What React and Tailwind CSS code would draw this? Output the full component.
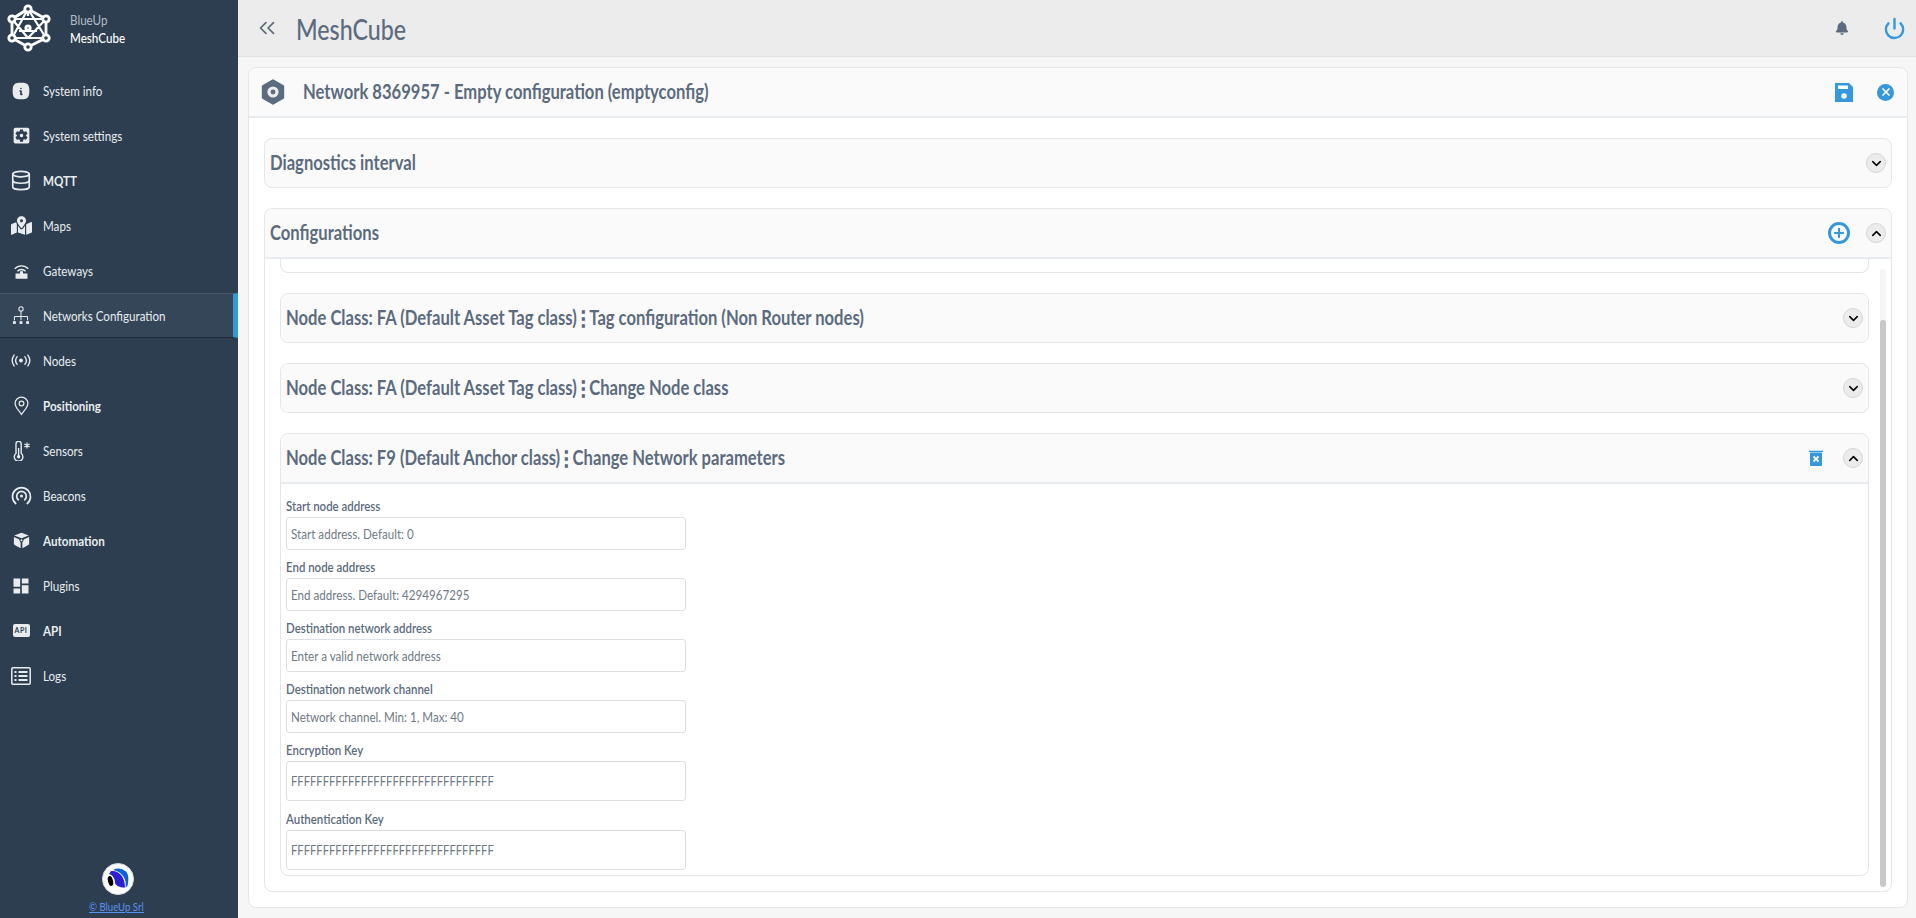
import React from "react";
import { ChevronsLeft, Power, ChevronDown, ChevronUp, Database, Plus, X } from "lucide-react";
import { FaMapMarkedAlt, FaBell } from "react-icons/fa";
import { MdSettingsApplications, MdDashboard } from "react-icons/md";
import { TbInfoSquareRoundedFilled } from "react-icons/tb";

const Logo = () => {
  const n = [[28,9],[46,19],[46,38],[28,47],[12,38],[12,19],[28,28]];
  return (
    <svg viewBox="0 0 56 56" className="h-[56px] w-[56px] shrink-0" fill="none" stroke="#fff" strokeLinejoin="round">
      <path d="M28 9 46 19 46 38 28 47 12 38 12 19Z" strokeWidth="2.800" />
      <path d="M28 9 12 38H46Z M12 19H46 L28 38 Z M19 31H37 M12 19 28 9 M28 9 28 16" strokeWidth="2.200" />
      {n.map(([x,y],i)=>(
        <circle key={i} cx={x} cy={y} r={i===6 ? 2.200 : 3.200} fill="#2c3e50" strokeWidth="2.800" />
      ))}
    </svg>
  );
};

const GatewayIcon = () => (
  <svg viewBox="0 0 20 20" className="w-[17px] h-[18px]" fill="none" stroke="#e8ecef" strokeWidth="1.6">
    <path d="M2 7.5a11 11 0 0 1 16 0" /><path d="M5.2 10.3a6.6 6.6 0 0 1 9.6 0" />
    <path d="M3 13h5.2v-2.8h3.6V13H17v6H3Z" fill="#e8ecef" stroke="none" />
  </svg>
);
const NetworkIcon = () => (
  <svg viewBox="0 0 17 20" className="w-[16px] h-[19px]" fill="none" stroke="#e8ecef" strokeWidth="1.1">
    <circle cx="8.500" cy="3" r="2.300" /><path d="M8.500 5.300V11M1.500 11H15.500M1.500 11v4M8.500 11v4M15.500 11v4" />
    <g fill="#e8ecef" stroke="none"><rect y="16" width="3" height="3" /><rect x="7" y="16" width="3" height="3" /><rect x="14" y="16" width="3" height="3" /></g>
  </svg>
);
const NodesIcon = () => (
  <svg viewBox="0 0 22 14" className="w-[20px] h-[13px]" fill="none" stroke="#e8ecef" strokeWidth="1.5" strokeLinecap="round">
    <circle cx="11" cy="7" r="2.1" fill="#e8ecef" stroke="none" />
    <path d="M6.8 2.8a6.5 6.5 0 0 0 0 8.4M15.2 2.8a6.5 6.5 0 0 1 0 8.4M3.4 1a10.5 10.5 0 0 0 0 12M18.6 1a10.5 10.5 0 0 1 0 12" />
  </svg>
);
const PinIcon = () => (
  <svg viewBox="0 0 16 20" className="w-[15px] h-[20px]" fill="none" stroke="#e8ecef" strokeWidth="1.3">
    <path d="M8 19C5 14.5 1.2 11.5 1.2 7.4a6.8 6.8 0 0 1 13.6 0C14.8 11.5 11 14.5 8 19Z" /><circle cx="8" cy="7.4" r="2.5" />
  </svg>
);
const SensorIcon = () => (
  <svg viewBox="0 0 20 20" className="w-[20px] h-[20px]" fill="none" stroke="#e8ecef" strokeWidth="1.4">
    <path d="M5 12.5V3a2.6 2.6 0 0 1 5.2 0v9.500a4.300 4.300 0 1 1-5.200 0Z" />
    <circle cx="7.600" cy="15.800" r="1.700" fill="#e8ecef" stroke="none" /><path d="M7.600 15V7" />
    <path d="M16 1.500v6M13.400 3l5.200 3M18.600 3l-5.200 3" strokeWidth="1.200" />
  </svg>
);
const BeaconIcon = () => (
  <svg viewBox="0 0 20 20" className="w-[21px] h-[20px]" fill="none" stroke="#e8ecef" strokeWidth="1.700" strokeLinecap="round">
    <path d="M4.200 17.500a9 9 0 1 1 11.600 0" /><path d="M6.800 13.800a4.800 4.800 0 1 1 6.400 0" />
    <circle cx="10" cy="10" r="1.500" fill="#e8ecef" stroke="none" />
  </svg>
);
const CubeIcon = () => (
  <svg viewBox="0 0 20 20" className="w-[17px] h-[17px]" fill="#e8ecef">
    <path d="M10 .8 18.500 4 10 7.400 1.500 4Z" />
    <path d="M1 6 7 8.400 9 12.500V19L4 16.500 1 14.500Z" />
    <path d="M19 6 13 8.400 11 12.500V19L16 16.500 19 14.500Z" />
    <circle cx="10" cy="9.800" r="1.200" />
  </svg>
);
const ApiIcon = () => (
  <span className="flex h-[13px] w-[17px] items-center justify-center rounded-[2px] bg-[#e8ecef] text-[7px] font-bold leading-none tracking-[0.5px] text-[#2c3e50]">API</span>
);
const LogsIcon = () => (
  <svg viewBox="0 0 20 18" className="w-[20px] h-[18px]" fill="none" stroke="#e8ecef" strokeWidth="1.500">
    <rect x=".8" y=".8" width="18.400" height="16.400" rx="1" />
    <path d="M7.500 5h9M7.500 9h9M7.500 13h9" strokeWidth="1.800" />
    <path d="M3.500 5h2M3.500 9h2M3.500 13h2" strokeWidth="1.800" />
  </svg>
);
const HexIcon = () => (
  <svg viewBox="0 0 24 26" className="w-[24px] h-[26px]">
    <path d="M12 1.500 22 7.200v11.600L12 24.500 2 18.800V7.200Z" fill="#5c6b7e" stroke="#5c6b7e" strokeWidth="2.400" strokeLinejoin="round" />
    <circle cx="12" cy="13" r="5.600" fill="#e9ebee" /><circle cx="12" cy="13" r="2.400" fill="#5c6b7e" />
  </svg>
);
const SaveIcon = () => (
  <svg viewBox="0 0 18 19" className="ml-auto h-[19px] w-[18px]">
    <path d="M0 0H14L18 4V19H0Z" fill="#3498db" />
    <rect x="3" y="2.500" width="10" height="3.500" fill="#fff" />
    <circle cx="9" cy="13" r="2.800" fill="#fff" />
  </svg>
);
const TrashIcon = () => (
  <svg viewBox="0 0 14 16" className="w-[14px] h-[16px]">
    <path d="M0 .8h14V2H0Z M1 2.500h12V15a1 1 0 0 1-1 1H2a1 1 0 0 1-1-1Z" fill="#3498db" />
    <path d="M4.500 6.500l5 5M9.500 6.500l-5 5" stroke="#fff" strokeWidth="1.800" />
  </svg>
);
const FooterLogo = () => (
  <svg viewBox="0 0 32 32" className="w-[32px] h-[32px]">
    <circle cx="16" cy="16" r="15.500" fill="#fff" stroke="#d8d8d8" />
    <path d="M11 7a12 12 0 0 1 13 1.500c2.500 2.500 3 8 1.500 14.500l-2 1.500C25 17 21 9 11 7Z" fill="#0d63d6" />
    <path d="M9 8c8-1 14 6 14 16.500C19 25 14 23 13 20c0-4-2-8-6-9Z" fill="#2a1fd4" />
    <ellipse cx="8.500" cy="18" rx="2.500" ry="5" fill="#000" transform="rotate(-15 8.500 18)" />
  </svg>
);

const nav = [
  { t: "System info", i: <TbInfoSquareRoundedFilled className="text-[#e8ecef] w-[20px] h-[20px]" /> },
  { t: "System settings", i: <MdSettingsApplications className="text-[#e8ecef] w-[21px] h-[21px]" /> },
  { t: "MQTT", b: true, i: <Database className="text-[#e8ecef] w-[23px] h-[23px]" strokeWidth={1.8} /> },
  { t: "Maps", i: <FaMapMarkedAlt className="text-[#e8ecef] w-[21px] h-[19px]" /> },
  { t: "Gateways", i: <GatewayIcon /> },
  { t: "Networks Configuration", i: <NetworkIcon />, active: true },
  { t: "Nodes", i: <NodesIcon /> },
  { t: "Positioning", b: true, i: <PinIcon /> },
  { t: "Sensors", i: <SensorIcon /> },
  { t: "Beacons", i: <BeaconIcon /> },
  { t: "Automation", b: true, i: <CubeIcon /> },
  { t: "Plugins", i: <MdDashboard className="text-[#e8ecef] w-[20px] h-[20px]" /> },
  { t: "API", b: true, i: <ApiIcon /> },
  { t: "Logs", i: <LogsIcon /> },
];

const Cond = ({ className = "", children }) => (
  <span className={"inline-block origin-left whitespace-nowrap scale-x-[0.83] " + className}>{children}</span>
);

const Dots = () => (
  <span className="-mx-[2.500px] font-bold [-webkit-text-stroke:0.7px_#5c6b7e]">⋮</span>
);

const Toggle = ({ up }) => (
  <span className="flex h-[20px] w-[20px] shrink-0 items-center justify-center rounded-full border border-[#d6d6d6] bg-[#ececec] text-black">
    {up ? <ChevronUp className="h-[15px] w-[15px]" strokeWidth={2.4} /> : <ChevronDown className="h-[15px] w-[15px]" strokeWidth={2.4} />}
  </span>
);

const Heading = ({ children }) => (
  <Cond className="-translate-y-[1px] text-[20px] font-bold leading-none text-[#5c6b7e]">{children}</Cond>
);

const Item = ({ title, children, open, right }) => (
  <div className="rounded-[8px] border border-[#e6e6e6] bg-white">
    <div className={"flex items-center rounded-t-[8px] bg-[#fafafa] pl-[5px] pr-[5px] " + (open ? "h-[50px] border-b-2 border-[#e8ebef]" : "h-[48px] rounded-b-[8px]")}>
      <Heading>{title}</Heading>
      <span className="ml-auto flex items-center gap-[20px]">{right}<Toggle up={open} /></span>
    </div>
    {children}
  </div>
);

const Field = ({ label, ph, tall, className = "" }) => (
  <div className={"flex flex-col " + className}>
    <label className="flex h-[28px] items-end pb-[4px] text-[13.800px] font-semibold leading-none text-[#5c6b7e]"><Cond>{label}</Cond></label>
    <div className={"w-[400px] overflow-hidden rounded-[3px] border border-[#dcdfe3] bg-white px-[4px] " + (tall ? "h-[40px]" : "h-[33px]")}>
      <input readOnly placeholder={ph} className={"h-full w-[120%] origin-left scale-x-[0.83] bg-transparent text-[#6f7a85] outline-none placeholder:text-[#6f7a85] " + (tall ? "text-[13.500px]" : "text-[14px]")} />
    </div>
  </div>
);

export default function App() {
  return (
    <div className="flex h-screen w-full overflow-hidden bg-[#f6f6f6] font-['Lato',sans-serif]">
      <aside className="flex w-[238px] shrink-0 flex-col bg-[#2c3e50]">
        <div className="flex h-[68px] items-start">
          <Logo />
          <div className="ml-[14px] mt-[11px] text-[14px] leading-[18px]">
            <div className="text-[#b4bcc4]"><Cond>BlueUp</Cond></div>
            <div className="font-medium text-white"><Cond>MeshCube</Cond></div>
          </div>
        </div>
        <nav className="flex flex-col">
          {nav.map((n) => (
            <a key={n.t} className={"flex h-[45px] items-center pl-[10px] text-[14px] text-[#e8ecef] " + (n.active ? "border-y border-r-[5px] border-t-[#46596b] border-b-[#1e2c3a] border-r-[#3498db] bg-[#344658]" : "")}>
              <span className="flex w-[22px] items-center justify-center">{n.i}</span>
              <Cond className={"ml-[11px] " + (n.b ? "font-bold" : "")}>{n.t}</Cond>
            </a>
          ))}
        </nav>
        <div className="mt-auto flex flex-col items-center pb-[4px] pr-[2px]">
          <FooterLogo />
          <a href="#" className="mt-[4px] flex w-[58px] text-[12px] leading-[15px] text-[#5b93f0] underline"><span className="inline-block origin-left scale-x-[0.8] whitespace-nowrap underline">© BlueUp Srl</span></a>
        </div>
      </aside>

      <main className="flex min-w-0 flex-1 flex-col">
        <header className="flex h-[57px] shrink-0 items-center border-b border-[#dde0e5] bg-[#ececec] pl-[16px] pr-[10px]">
          <ChevronsLeft className="h-[26px] w-[26px] text-[#5c6b7e]" strokeWidth={1.6} />
          <h1 className="ml-[16px] translate-y-[1px] text-[28px] font-medium leading-none text-[#5c6b7e]"><Cond>MeshCube</Cond></h1>
          <FaBell className="ml-auto h-[14px] w-[14px] text-[#5c6b7e]" />
          <Power className="ml-[34px] h-[23px] w-[23px] text-[#3498db]" strokeWidth={2.5} />
        </header>

        <section className="m-[10px_8px_10px_10px] flex min-h-0 flex-1 flex-col rounded-[8px] border border-[#e6e6e6] bg-white">
          <div className="flex h-[50px] shrink-0 items-center rounded-t-[8px] border-b-2 border-[#e8ebef] bg-[#fafafa] pl-[12px] pr-[13px]">
            <HexIcon />
            <Cond className="ml-[18px] -translate-y-[1px] text-[20px] font-bold leading-none text-[#5c6b7e]">Network 8369957 - Empty configuration (emptyconfig)</Cond>
            <SaveIcon />
            <span className="ml-[24px] flex h-[17px] w-[17px] items-center justify-center rounded-full bg-[#3498db] text-white"><X className="h-[12px] w-[12px]" strokeWidth={3.4} /></span>
          </div>

          <div className="flex min-h-0 flex-1 flex-col gap-[20px] px-[15px] pb-[15px] pt-[20px]">
            <div className="flex h-[50px] shrink-0 items-center rounded-[8px] border border-[#e6e6e6] bg-[#fafafa] pl-[5px] pr-[5px]">
              <Heading>Diagnostics interval</Heading>
              <span className="ml-auto"><Toggle /></span>
            </div>

            <div className="flex min-h-0 flex-1 flex-col rounded-[8px] border border-[#e6e6e6]">
              <div className="flex h-[50px] shrink-0 items-center rounded-t-[8px] border-b-2 border-[#e8ebef] bg-[#fafafa] pl-[5px] pr-[5px]">
                <Heading>Configurations</Heading>
                <span className="ml-auto flex items-center gap-[16px]">
                  <span className="flex h-[22px] w-[22px] items-center justify-center rounded-full border-[3px] border-[#3498db] text-[#3498db]"><Plus className="h-[14px] w-[14px]" strokeWidth={3.6} /></span>
                  <Toggle up />
                </span>
              </div>

              <div className="flex min-h-0 flex-1 pb-[4px] pl-[15px] pr-[5px]">
                <div className="flex min-w-0 flex-1 flex-col gap-[20px]">
                  <div className="h-[14px] shrink-0 rounded-b-[8px] border-x border-b border-[#e6e6e6] bg-white" />
                  <Item title={<>Node Class: FA (Default Asset Tag class)<Dots />Tag configuration (Non Router nodes)</>} />
                  <Item title={<>Node Class: FA (Default Asset Tag class)<Dots />Change Node class</>} />
                  <Item open title={<>Node Class: F9 (Default Anchor class)<Dots />Change Network parameters</>} right={<TrashIcon />}>
                    <div className="flex flex-col pb-[5px] pl-[5px] pt-[5px]">
                      <Field label="Start node address" ph="Start address. Default: 0" />
                      <Field label="End node address" ph="End address. Default: 4294967295" />
                      <Field label="Destination network address" ph="Enter a valid network address" />
                      <Field label="Destination network channel" ph="Network channel. Min: 1, Max: 40" />
                      <Field label="Encryption Key" ph="FFFFFFFFFFFFFFFFFFFFFFFFFFFFFFFF" tall />
                      <Field label="Authentication Key" ph="FFFFFFFFFFFFFFFFFFFFFFFFFFFFFFFF" tall className="mt-[1px]" />
                    </div>
                  </Item>
                </div>
                <div className="ml-[11px] mt-[10px] flex w-[6px] shrink-0 flex-col rounded-[3px] bg-[#f5f5f5]">
                  <div className="mt-[51px] flex-1 rounded-[3px] bg-[#c8c8c8]" />
                </div>
              </div>
            </div>
          </div>
        </section>
      </main>
    </div>
  );
}
